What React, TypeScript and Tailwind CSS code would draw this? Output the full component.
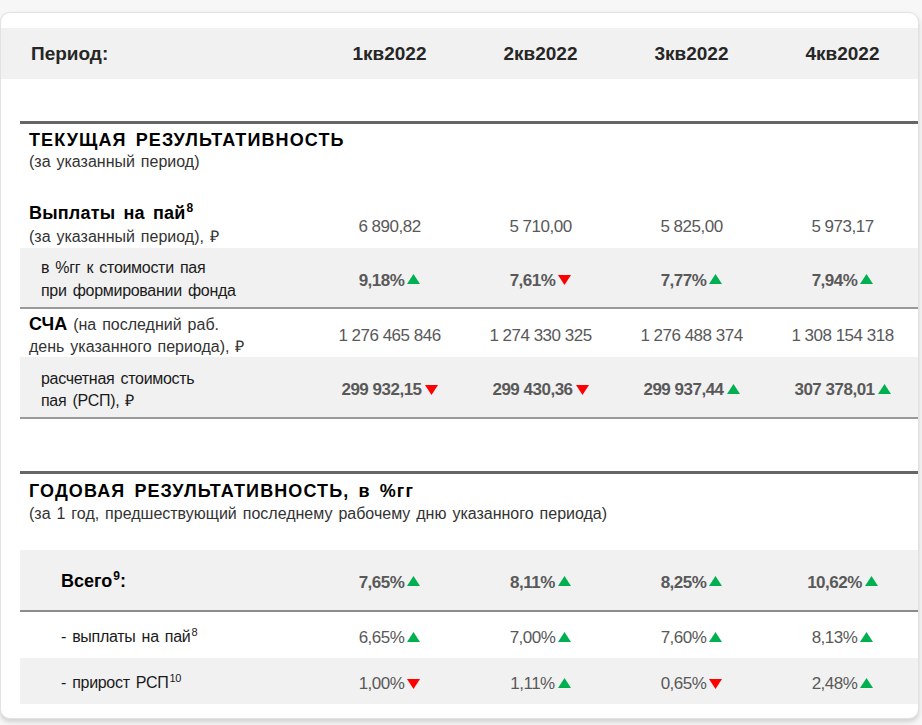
import React from "react";

const Up = () => (
  <svg width="13" height="10" viewBox="0 0 13 10" className="ml-[3px] mb-[3px] inline-block shrink-0">
    <polygon points="6.5,0 13,10 0,10" fill="#00b050" />
  </svg>
);
const Down = () => (
  <svg width="13" height="10" viewBox="0 0 13 10" className="ml-[3px] mb-[1px] inline-block shrink-0">
    <polygon points="0,0 13,0 6.5,10" fill="#ff0000" />
  </svg>
);

type V = { t: string; d?: "u" | "d" };

const Cell = ({ v, bold, pt }: { v: V; bold?: boolean; pt: string }) => (
  <div className={`w-[151px] shrink-0 flex items-center justify-center ${pt}`}>
    <span
      className={`flex items-center text-[17px] tracking-[-0.5px] text-[#595959] ${bold ? "font-bold" : ""}`}
    >
      {v.t}
      {v.d === "u" && <Up />}
      {v.d === "d" && <Down />}
    </span>
  </div>
);

const Values = ({ vals, bold, pt = "pt-[4px]" }: { vals: V[]; bold?: boolean; pt?: string }) => (
  <div className="flex self-stretch">
    {vals.map((v, i) => (
      <Cell key={i} v={v} bold={bold} pt={pt} />
    ))}
  </div>
);

const sub = "text-[16px] text-[#333] tracking-[0px] [word-spacing:1.5px]";
const lab = "text-[16px] text-[#1a1a1a] tracking-[-0.3px] [word-spacing:2px]";
const title = "text-[18px] leading-[22px] font-bold tracking-[1.1px] text-black [word-spacing:3px]";

export default function App() {
  return (
    <div
      className="w-[922px] h-[725px] overflow-hidden bg-[#f7f7f7] pt-[12px]"
      style={{ fontFamily: '"Liberation Sans", Arial, sans-serif' }}
    >
      <div className="w-[919px] h-[707px] bg-white border border-[#e2e2e2] rounded-[10px] pt-[15px] shadow-[0_3px_5px_rgba(0,0,0,0.16)]">
        {/* Header band */}
        <div className="flex h-[51px] items-center bg-[#f1f1f1] pt-[2px]">
          <div className="w-[313px] pl-[30px] text-[19px] font-bold text-[#262626]">Период:</div>
          {["1кв2022", "2кв2022", "3кв2022", "4кв2022"].map((h) => (
            <div key={h} className="w-[151px] text-center text-[19px] font-bold text-[#262626]">
              {h}
            </div>
          ))}
        </div>

        <div className="ml-[19px] mt-[42px]">
          {/* Section 1 */}
          <div className="border-t-[3px] border-[#666666] pt-[5px] pl-[9px]">
            <div className={title}>ТЕКУЩАЯ РЕЗУЛЬТАТИВНОСТЬ</div>
            <div className={`${sub} leading-[22px]`}>(за указанный период)</div>
          </div>

          {/* Выплаты */}
          <div className="mt-[27px] flex h-[48px] items-center">
            <div className="flex-1 pl-[9px] pt-[2px]">
              <div className="text-[18px] leading-[24px] font-bold text-black tracking-[0.2px] [word-spacing:3px]">
                Выплаты на пай<sup className="text-[12px] top-[-7px] ml-[1px]">8</sup>
              </div>
              <div className={`${sub} leading-[24px]`}>(за указанный период), ₽</div>
            </div>
            <Values pt="pt-[5px]" vals={[{ t: "6 890,82" }, { t: "5 710,00" }, { t: "5 825,00" }, { t: "5 973,17" }]} />
          </div>

          {/* в %гг */}
          <div className="flex h-[61px] items-center bg-[#f1f1f1] border-b-[2px] border-[#9a9a9a]">
            <div className="flex-1 pl-[21px] pt-[3px]">
              <div className={`${lab} leading-[23px]`}>в %гг к стоимости пая</div>
              <div className={`${lab} leading-[23px]`}>при формировании фонда</div>
            </div>
            <Values bold pt="pt-[6px]" vals={[{ t: "9,18%", d: "u" }, { t: "7,61%", d: "d" }, { t: "7,77%", d: "u" }, { t: "7,94%", d: "u" }]} />
          </div>

          {/* СЧА */}
          <div className="flex h-[48px] items-center">
            <div className="flex-1 pl-[9px] pt-[4px]">
              <div className={`${sub} leading-[22px]`}>
                <span className="text-[18px] font-bold text-black">СЧА</span> (на последний раб.
              </div>
              <div className={`${sub} leading-[22px]`}>день указанного периода), ₽</div>
            </div>
            <Values pt="pt-[5px]" vals={[{ t: "1 276 465 846" }, { t: "1 274 330 325" }, { t: "1 276 488 374" }, { t: "1 308 154 318" }]} />
          </div>

          {/* РСП */}
          <div className="flex h-[62px] items-center bg-[#f1f1f1] border-b-[2px] border-[#9a9a9a]">
            <div className="flex-1 pl-[21px] pt-[5px]">
              <div className={`${lab} leading-[22px]`}>расчетная стоимость</div>
              <div className={`${lab} leading-[22px]`}>пая (РСП), ₽</div>
            </div>
            <Values bold pt="pt-[6px]" vals={[{ t: "299 932,15", d: "d" }, { t: "299 430,36", d: "d" }, { t: "299 937,44", d: "u" }, { t: "307 378,01", d: "u" }]} />
          </div>

          {/* Section 2 */}
          <div className="mt-[52px] border-t-[3px] border-[#666666] pt-[6px] pl-[9px]">
            <div className={title}>ГОДОВАЯ РЕЗУЛЬТАТИВНОСТЬ, в %гг</div>
            <div className={`${sub} leading-[24px]`}>
              (за 1 год, предшествующий последнему рабочему дню указанного периода)
            </div>
          </div>

          <div className="mt-[24px] flex h-[62px] items-center bg-[#f1f1f1] border-b-[2px] border-[#8c8c8c]">
            <div className="flex-1 pl-[41px] pt-[2px] text-[18px] font-bold text-black">
              Всего<sup className="text-[12px] top-[-7px] ml-[1px]">9</sup>:
            </div>
            <Values bold pt="pt-[5px]" vals={[{ t: "7,65%", d: "u" }, { t: "8,11%", d: "u" }, { t: "8,25%", d: "u" }, { t: "10,62%", d: "u" }]} />
          </div>

          <div className="flex h-[46px] items-center">
            <div className={`flex-1 pl-[41px] pt-[3px] ${lab}`}>
              - выплаты на пай<sup className="text-[11px] top-[-6px] ml-[1px]">8</sup>
            </div>
            <Values pt="pt-[6px]" vals={[{ t: "6,65%", d: "u" }, { t: "7,00%", d: "u" }, { t: "7,60%", d: "u" }, { t: "8,13%", d: "u" }]} />
          </div>

          <div className="flex h-[46px] items-center bg-[#f1f1f1]">
            <div className={`flex-1 pl-[41px] pt-[3px] ${lab}`}>
              - прирост РСП<sup className="text-[11px] top-[-6px] ml-[1px]">10</sup>
            </div>
            <Values pt="pt-[6px]" vals={[{ t: "1,00%", d: "d" }, { t: "1,11%", d: "u" }, { t: "0,65%", d: "d" }, { t: "2,48%", d: "u" }]} />
          </div>
        </div>
      </div>
    </div>
  );
}
